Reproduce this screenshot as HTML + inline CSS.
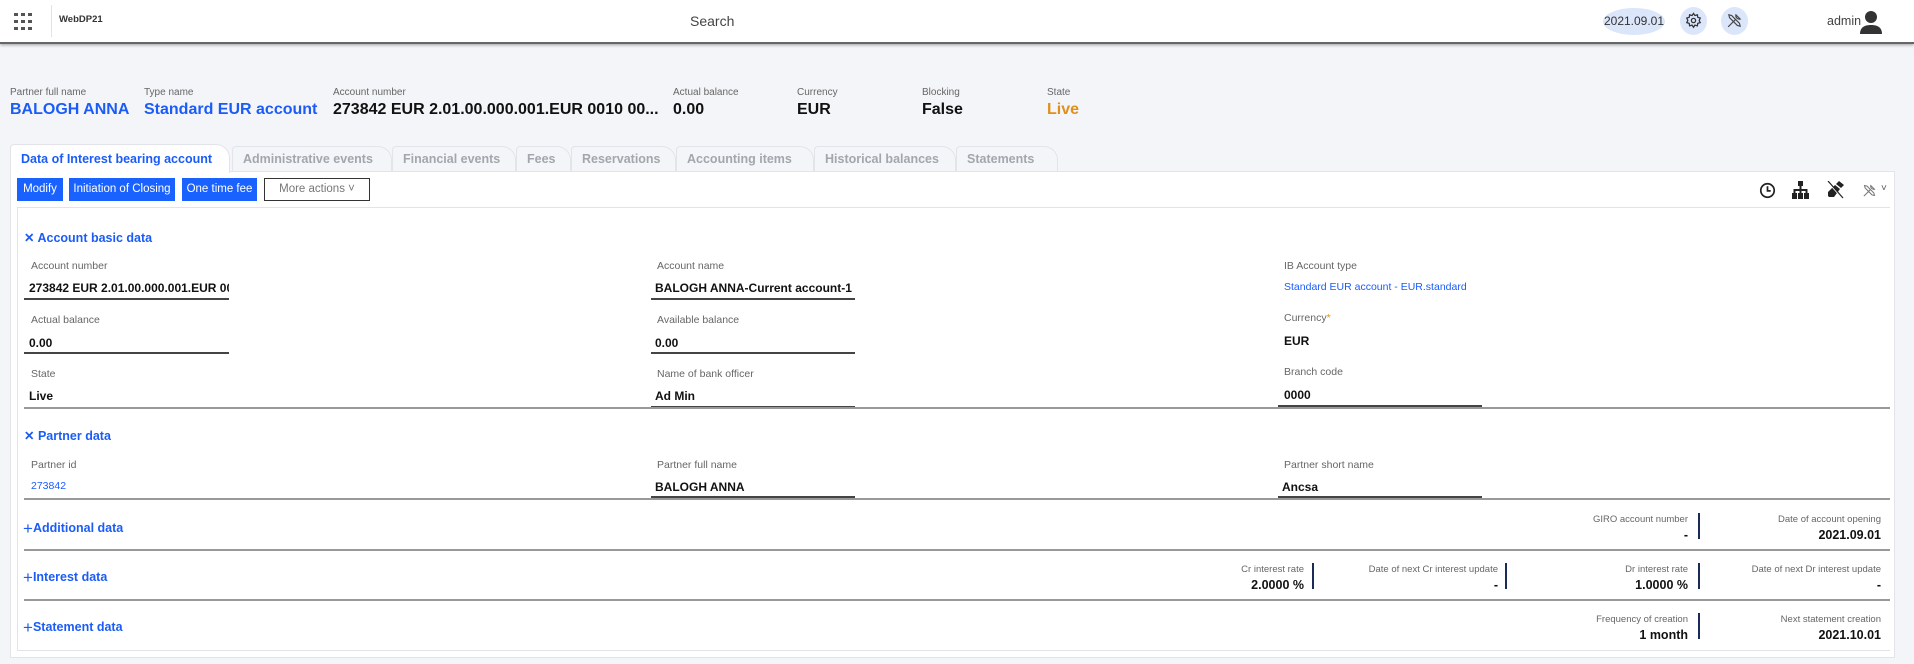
<!DOCTYPE html>
<html><head><meta charset="utf-8">
<style>
*{box-sizing:border-box;margin:0;padding:0}
body{width:1914px;height:664px;overflow:hidden;background:#f4f5f9;font-family:"Liberation Sans",sans-serif;color:#111;position:relative}
.a{position:absolute;white-space:nowrap}
.hdr{position:absolute;left:0;top:0;width:1914px;height:44px;background:#fff;border-bottom:2px solid #666;box-shadow:0 1px 3px rgba(0,0,0,.35)}
.lbl{font-size:10px;color:#666}
.sv{font-size:16px;font-weight:bold}
.blue{color:#1b5cf7}
.tab{position:absolute;top:146px;height:26px;border:1px solid #e3e4ea;border-bottom:none;border-radius:4px 14px 0 0;background:#f4f5f9;font-size:12.5px;font-weight:bold;color:#a4a6ad;padding:5px 0 0 10px;white-space:nowrap}
.btn{position:absolute;top:178px;height:23px;background:#1a62ff;color:#fff;font-size:11.5px;text-align:center;line-height:23px;white-space:nowrap}
.fl{position:absolute;font-size:10.5px;color:#666;white-space:nowrap}
.fv{position:absolute;font-size:12px;font-weight:bold;color:#111;white-space:nowrap}
.ul{position:absolute;height:1.5px;background:#444}
.sec{position:absolute;font-size:12.5px;font-weight:bold;color:#1b5cf7;white-space:nowrap}
.hl{position:absolute;left:24px;width:1866px;height:1.5px;background:#999}
.ri{position:absolute;text-align:right;white-space:nowrap}
.ri .l{font-size:9.5px;color:#666}
.ri .v{font-size:12.5px;font-weight:bold;margin-top:3px}
.vb{position:absolute;width:2px;height:26px;background:#1a2a5a}
</style></head><body>
<div class="hdr"></div>
<svg class="a" style="left:14px;top:13px" width="18" height="17" viewBox="0 0 18 17" fill="#555"><rect x="0" y="0" width="4" height="3"/><rect x="7" y="0" width="4" height="3"/><rect x="14" y="0" width="4" height="3"/><rect x="0" y="7" width="4" height="3"/><rect x="7" y="7" width="4" height="3"/><rect x="14" y="7" width="4" height="3"/><rect x="0" y="14" width="4" height="3"/><rect x="7" y="14" width="4" height="3"/><rect x="14" y="14" width="4" height="3"/></svg>
<div class="a" style="left:51px;top:5px;width:1px;height:32px;background:#dde3f0"></div>
<div class="a" style="left:59px;top:14px;font-size:9.5px;font-weight:bold;color:#333">WebDP21</div>
<div class="a" style="left:690px;top:13px;font-size:14px;color:#444">Search</div>
<div class="a" style="left:1603px;top:8px;width:62px;height:27px;border-radius:50%;background:#dbe6fb;font-size:12px;color:#333;text-align:center;line-height:27px">2021.09.01</div>
<div class="a" style="left:1680px;top:7px;width:27px;height:28px;border-radius:50%;background:#dbe6fb"></div>
<svg class="a" style="left:1685px;top:12px" width="17" height="17" viewBox="0 0 24 24" fill="none" stroke="#333" stroke-width="1.8"><circle cx="12" cy="12" r="3"/><path d="M12 2l2 3 3.5-1 .5 3.5 3.5 1-1.5 3.5 1.5 3-3.5 1-.5 3.5-3.5-1-2 3-2-3-3.5 1-.5-3.5-3.5-1 1.5-3-1.5-3.5 3.5-1 .5-3.5 3.5 1z"/></svg>
<div class="a" style="left:1721px;top:7px;width:27px;height:28px;border-radius:50%;background:#dbe6fb"></div>
<svg class="a" style="left:1726px;top:12px" width="17" height="17" viewBox="0 0 24 24" fill="none" stroke="#444" stroke-width="1.6"><path d="M3 21l10-10M14 4a5 5 0 0 0 6 6l-3-3zM4 4l4 1 11 11 1 4-4-1L5 8z"/></svg>
<div class="a" style="left:1827px;top:14px;font-size:12.5px;color:#444">admin</div>
<svg class="a" style="left:1860px;top:10px" width="22" height="24" viewBox="0 0 22 24" fill="#333"><circle cx="11" cy="7" r="6"/><path d="M0 24c0-7 5-9 11-9s11 2 11 9z"/></svg>

<div class="a lbl" style="left:10px;top:87px">Partner full name</div>
<div class="a sv blue" style="left:10px;top:101px">BALOGH ANNA</div>
<div class="a lbl" style="left:144px;top:87px">Type name</div>
<div class="a sv blue" style="left:144px;top:101px">Standard EUR account</div>
<div class="a lbl" style="left:333px;top:87px">Account number</div>
<div class="a sv" style="left:333px;top:101px">273842 EUR 2.01.00.000.001.EUR 0010 00...</div>
<div class="a lbl" style="left:673px;top:87px">Actual balance</div>
<div class="a sv" style="left:673px;top:101px">0.00</div>
<div class="a lbl" style="left:797px;top:87px">Currency</div>
<div class="a sv" style="left:797px;top:101px">EUR</div>
<div class="a lbl" style="left:922px;top:87px">Blocking</div>
<div class="a sv" style="left:922px;top:101px">False</div>
<div class="a lbl" style="left:1047px;top:87px">State</div>
<div class="a sv" style="left:1047px;top:101px;color:#e0901a">Live</div>

<div class="tab" style="left:232px;width:160px">Administrative events</div>
<div class="tab" style="left:392px;width:124px">Financial events</div>
<div class="tab" style="left:516px;width:55px">Fees</div>
<div class="tab" style="left:571px;width:105px">Reservations</div>
<div class="tab" style="left:676px;width:138px">Accounting items</div>
<div class="tab" style="left:814px;width:142px">Historical balances</div>
<div class="tab" style="left:956px;width:102px">Statements</div>
<div class="a" style="left:10px;top:171px;width:1885px;height:487px;background:#fff;border:1px solid #e3e4ea"></div>
<div class="tab" style="left:10px;top:144px;width:220px;height:29px;background:#fff;color:#1b5cf7;padding-top:7px;border-color:#e3e4ea;z-index:2">Data of Interest bearing account</div>

<div class="btn" style="left:17px;width:46px">Modify</div>
<div class="btn" style="left:69px;width:106px">Initiation of Closing</div>
<div class="btn" style="left:182px;width:75px">One time fee</div>
<div class="btn" style="left:264px;width:106px;background:#fff;border:1px solid #333;color:#777;line-height:21px">More actions ˅</div>

<svg class="a" style="left:1759px;top:182px" width="17" height="17" viewBox="0 0 24 24" fill="none" stroke="#222" stroke-width="2.4"><circle cx="12" cy="12" r="9.5"/><path d="M12 6v6.5h4.5"/></svg>
<svg class="a" style="left:1792px;top:181px" width="17" height="18" viewBox="0 0 17 18" fill="#222"><rect x="6" y="0" width="5" height="5"/><rect x="7.5" y="5" width="2" height="4"/><rect x="1.5" y="8" width="14" height="2"/><rect x="1.5" y="8" width="2" height="4"/><rect x="7.5" y="8" width="2" height="4"/><rect x="13.5" y="8" width="2" height="4"/><rect x="0" y="12" width="5" height="6"/><rect x="6" y="12" width="5" height="6"/><rect x="12" y="12" width="5" height="6"/></svg>
<svg class="a" style="left:1827px;top:181px" width="17" height="18" viewBox="0 0 17 18" fill="#222"><path d="M12 0l5 4-3 3-5-4zM8 4l5 4-6 8H2l-1-1v-4z"/><path d="M1 1l15 17" stroke="#fff" stroke-width="1.5"/><path d="M1 0l15 17" stroke="#222" stroke-width="1.2"/></svg>
<svg class="a" style="left:1862px;top:183px" width="15" height="15" viewBox="0 0 24 24" fill="none" stroke="#777" stroke-width="1.6"><path d="M3 21l10-10M14 4a5 5 0 0 0 6 6l-3-3zM4 4l4 1 11 11 1 4-4-1L5 8z"/></svg>
<div class="a" style="left:1881px;top:183px;font-size:10px;color:#555">˅</div>

<div class="a" style="left:17px;top:207px;width:1873px;height:444px;border:1px solid #e3e4ea;border-right:none"></div>

<div class="sec" style="left:24px;top:230px">✕ Account basic data</div>
<div class="fl" style="left:31px;top:260px">Account number</div>
<div class="fv" style="left:29px;top:281px;width:200px;overflow:hidden">273842 EUR 2.01.00.000.001.EUR 0010</div>
<div class="ul" style="left:24px;top:298px;width:205px"></div>
<div class="fl" style="left:657px;top:260px">Account name</div>
<div class="fv" style="left:655px;top:281px;width:200px;overflow:hidden">BALOGH ANNA-Current account-1</div>
<div class="ul" style="left:651px;top:298px;width:204px"></div>
<div class="fl" style="left:1284px;top:260px">IB Account type</div>
<div class="fv" style="left:1284px;top:281px;font-weight:normal;font-size:10.5px;color:#1b5cf7">Standard EUR account - EUR.standard</div>

<div class="fl" style="left:31px;top:314px">Actual balance</div>
<div class="fv" style="left:29px;top:336px">0.00</div>
<div class="ul" style="left:24px;top:352px;width:205px"></div>
<div class="fl" style="left:657px;top:314px">Available balance</div>
<div class="fv" style="left:655px;top:336px">0.00</div>
<div class="ul" style="left:651px;top:352px;width:204px"></div>
<div class="fl" style="left:1284px;top:312px">Currency<span style="color:#e0901a">*</span></div>
<div class="fv" style="left:1284px;top:334px">EUR</div>

<div class="fl" style="left:31px;top:368px">State</div>
<div class="fv" style="left:29px;top:389px">Live</div>
<div class="fl" style="left:657px;top:368px">Name of bank officer</div>
<div class="fv" style="left:655px;top:389px">Ad Min</div>
<div class="ul" style="left:651px;top:406px;width:204px"></div>
<div class="fl" style="left:1284px;top:366px">Branch code</div>
<div class="fv" style="left:1284px;top:388px">0000</div>
<div class="ul" style="left:1278px;top:405px;width:204px"></div>
<div class="hl" style="top:407px"></div>

<div class="sec" style="left:24px;top:428px">✕ Partner data</div>
<div class="fl" style="left:31px;top:459px">Partner id</div>
<div class="fv" style="left:31px;top:480px;font-weight:normal;font-size:10.5px;color:#1b5cf7">273842</div>
<div class="fl" style="left:657px;top:459px">Partner full name</div>
<div class="fv" style="left:655px;top:480px">BALOGH ANNA</div>
<div class="ul" style="left:651px;top:496px;width:204px"></div>
<div class="fl" style="left:1284px;top:459px">Partner short name</div>
<div class="fv" style="left:1282px;top:480px">Ancsa</div>
<div class="ul" style="left:1278px;top:496px;width:204px"></div>
<div class="hl" style="top:498px"></div>

<div class="sec" style="left:23px;top:519px"><span style="font-size:17px;font-weight:normal;vertical-align:-2px">+</span>Additional data</div>
<div class="ri" style="right:226px;top:514px"><div class="l">GIRO account number</div><div class="v">-</div></div>
<div class="vb" style="left:1698px;top:513px"></div>
<div class="ri" style="right:33px;top:514px"><div class="l">Date of account opening</div><div class="v">2021.09.01</div></div>
<div class="hl" style="top:549px"></div>

<div class="sec" style="left:23px;top:568px"><span style="font-size:17px;font-weight:normal;vertical-align:-2px">+</span>Interest data</div>
<div class="ri" style="right:610px;top:564px"><div class="l">Cr interest rate</div><div class="v">2.0000 %</div></div>
<div class="vb" style="left:1312px;top:563px"></div>
<div class="ri" style="right:416px;top:564px"><div class="l">Date of next Cr interest update</div><div class="v">-</div></div>
<div class="vb" style="left:1505px;top:563px"></div>
<div class="ri" style="right:226px;top:564px"><div class="l">Dr interest rate</div><div class="v">1.0000 %</div></div>
<div class="vb" style="left:1698px;top:563px"></div>
<div class="ri" style="right:33px;top:564px"><div class="l">Date of next Dr interest update</div><div class="v">-</div></div>
<div class="hl" style="top:599px"></div>

<div class="sec" style="left:23px;top:618px"><span style="font-size:17px;font-weight:normal;vertical-align:-2px">+</span>Statement data</div>
<div class="ri" style="right:226px;top:614px"><div class="l">Frequency of creation</div><div class="v">1 month</div></div>
<div class="vb" style="left:1698px;top:613px"></div>
<div class="ri" style="right:33px;top:614px"><div class="l">Next statement creation</div><div class="v">2021.10.01</div></div>
</body></html>
